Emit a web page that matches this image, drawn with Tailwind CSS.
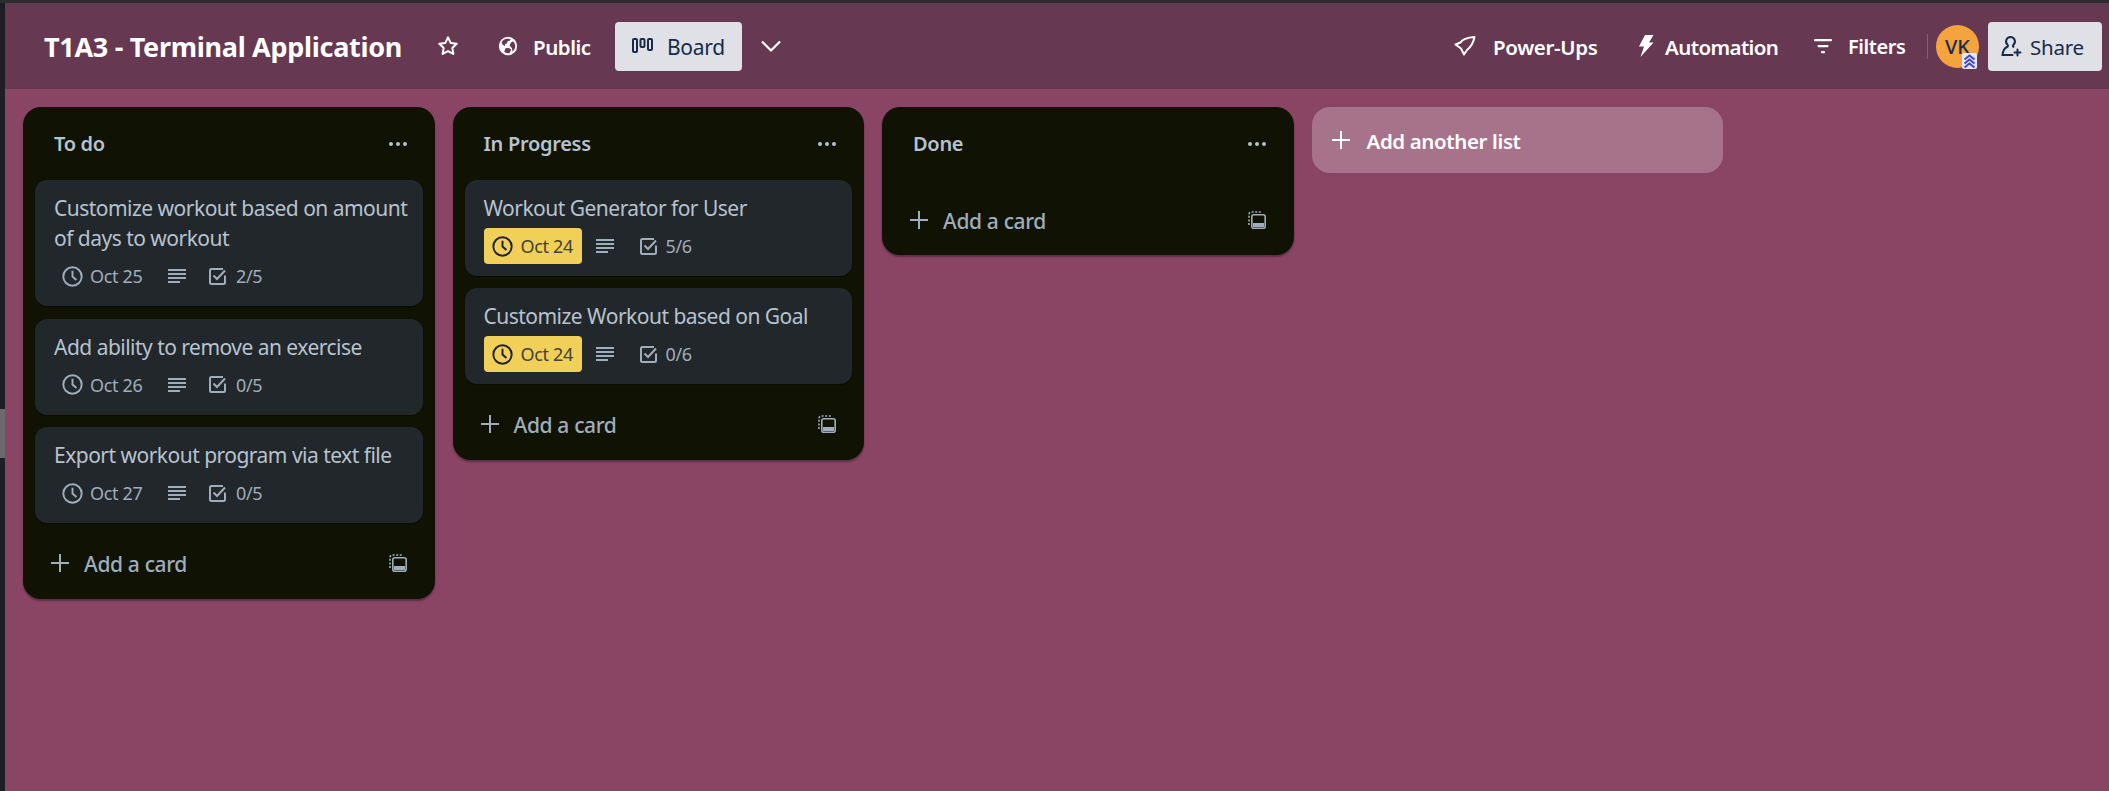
<!DOCTYPE html>
<html>
<head>
<meta charset="utf-8">
<script src="https://cdn.jsdelivr.net/npm/@tailwindcss/browser@4"></script>
</head>
<body class="m-0 h-[791px] w-[2109px] overflow-hidden bg-[#8a4565] font-['Noto_Sans','Open_Sans',sans-serif]">
<div class="h-[3px] bg-[#2b2d31]"></div>
<div class="flex h-[788px]">
  <aside class="w-[5px] shrink-0 bg-[#1e1f26]">
    <div class="mt-[406px] h-[49px] bg-[#6a6a6e]"></div>
  </aside>
  <main class="flex-1 min-w-0 flex flex-col">
    <header class="h-[86px] shrink-0 bg-[#673852] flex items-center text-white">
      <h1 class="ml-[39px] w-[359px] whitespace-nowrap text-[27px] leading-[34px] font-bold tracking-[-0.3px] pt-px">T1A3 - Terminal Application</h1>
      <svg class="ml-[34px] w-[22px] h-[22px]" viewBox="0 0 24 24" fill="none" stroke="currentColor" stroke-width="2.2" stroke-linejoin="round"><path d="M12 2.500l2.900 6.100 6.600.9-4.800 4.600 1.200 6.600L12 17.500l-5.900 3.200 1.200-6.600-4.800-4.600 6.600-.9z"/></svg>
      <svg class="ml-[38px] w-[22px] h-[22px]" viewBox="0 0 24 24" fill="currentColor"><path fill-rule="evenodd" d="M12 2a10 10 0 1 0 0 20 10 10 0 0 0 0-20zM6 6.200A8 8 0 0 1 12 4c1 0 2 .2 2.900.5l-1 1.700-2.400.6-.5 2.200-2.300 1 .3 2.200-2.500-1.200L5 8.500zM13.500 19.900a8 8 0 0 1-5.600-1.700l1.400-3.700 3.700-.4 2.500 2.100zM17 17.900l-.6-3.400-2.500-2.900 1-3.100 2.800-1.700 1.600 2.800.7 2.400a8 8 0 0 1-3 6.200z"/></svg>
      <span class="ml-[14px] w-[59px] whitespace-nowrap text-[20.500px] leading-[28px] font-semibold tracking-[-0.45px] pt-px">Public</span>
      <button class="ml-[23px] w-[127px] h-[49px] rounded-[4px] bg-[#dfe1e6] text-[#172b4d] flex items-center pl-[17px]">
        <svg class="w-[21px] h-[16px]" viewBox="0 0 21 16" fill="none" stroke="currentColor" stroke-width="2"><rect x="1" y="1" width="4" height="13" rx="1"/><rect x="8.500" y="1" width="4" height="8" rx="1"/><rect x="16" y="1" width="4" height="11" rx="1"/></svg>
        <span class="ml-[14px] text-[21px] leading-[28px] tracking-[-0.3px] pt-px">Board</span>
      </button>
      <svg class="ml-[18px] w-[22px] h-[14px]" viewBox="0 0 22 14" fill="none" stroke="currentColor" stroke-width="2.200"><path d="M2 2.500l9 9 9-9"/></svg>
      <div class="ml-auto flex items-center pr-[7px]">
        <svg class="w-[24px] h-[24px]" viewBox="0 0 24 24" fill="none" stroke="currentColor" stroke-width="2" stroke-linejoin="round"><path d="M21.500 3C15 3.500 9.500 5 7.500 8.500L2.500 10.500l5.500 4 3 6 3-4.500C18.500 12.500 20.500 8 21.500 3z"/></svg>
        <span class="ml-[16px] w-[104px] whitespace-nowrap text-[20.500px] leading-[28px] font-semibold tracking-[-0.35px] pt-px">Power-Ups</span>
        <svg class="ml-[41px] w-[16px] h-[24px]" viewBox="0 0 16 24" fill="currentColor"><path d="M7 1h8.500L11 8.500h4.500L2.500 23l3.500-10.500H1z"/></svg>
        <span class="ml-[11px] w-[114px] whitespace-nowrap text-[20.500px] leading-[28px] font-semibold tracking-[-0.6px] pt-px">Automation</span>
        <svg class="ml-[35px] w-[18px] h-[16px]" viewBox="0 0 18 16" fill="currentColor"><rect y="1" width="18" height="2.200" rx="1"/><rect x="3.500" y="7" width="11" height="2.200" rx="1"/><rect x="7" y="13" width="4" height="2.200" rx="1"/></svg>
        <span class="ml-[16px] w-[57px] whitespace-nowrap text-[20px] leading-[28px] font-semibold tracking-[-0.45px] pt-px">Filters</span>
        <div class="ml-[22px] w-px h-[25px] bg-white/20"></div>
        <div class="relative ml-[8px] w-[43px] h-[43px] rounded-full bg-[#f5a33c] text-[#172b4d] flex items-center justify-center text-[20px] leading-[28px] font-medium pt-px">VK
          <svg class="absolute right-[2px] bottom-[-1px] w-[15px] h-[16px] rounded-[2px] bg-[#e4e6f2]" viewBox="0 0 15 16" fill="none" stroke="#3f45c4" stroke-width="2"><path d="M2.500 6.500l5-4 5 4M2.500 10.500l5-4 5 4M2.500 14.500l5-4 5 4"/></svg>
        </div>
        <button class="ml-[9px] w-[114px] h-[49px] rounded-[4px] bg-[#dfe1e6] text-[#172b4d] flex items-center pl-[13px]">
          <svg class="w-[21px] h-[22px]" viewBox="0 0 21 22" fill="none" stroke="currentColor" stroke-width="2" stroke-linecap="round"><path d="M9.500 2a4.500 4.500 0 0 1 3 7.800c-.8.700-.8 1.500 0 2M6.500 9.800A4.500 4.500 0 0 1 9.500 2M6.500 9.800c.8.800.5 1.700-.5 2.200-2.500 1.200-4 3-4.500 8h10"/><path d="M16.500 14.500v6M13.500 17.500h6"/></svg>
          <span class="ml-[8px] text-[20.500px] leading-[28px] tracking-[-0.25px] pt-px">Share</span>
        </button>
      </div>
    </header>

    <section class="flex-1 flex items-start gap-[18px] pl-[18px] pt-[18px]">

      <div class="w-[411.500px] shrink-0 rounded-[18px] bg-[#101204] px-[12px] shadow-[0_2px_2px_rgba(0,0,0,0.35)]">
        <div class="h-[73px] flex items-center justify-between pl-[19px] pr-[15px]">
          <h2 class="text-[20px] leading-[28px] font-semibold text-[#b6c2cf] tracking-[-0.3px] pt-px">To do</h2>
          <svg class="w-[20px] h-[6px] text-[#b6c2cf]" viewBox="0 0 20 6" fill="currentColor"><circle cx="3" cy="3" r="2"/><circle cx="10" cy="3" r="2"/><circle cx="17" cy="3" r="2"/></svg>
        </div>
        <div class="flex flex-col gap-[12.500px]">
          <article class="rounded-[12px] bg-[#22272b] pt-[13px] pb-[12px] pl-[19px] pr-[12px] shadow-[0_1px_1px_rgba(0,0,0,0.4)]">
            <p class="text-[21px] leading-[30px] text-[#b6c2cf] tracking-[-0.52px]">Customize workout based on amount of days to workout</p>
            <div class="mt-[5px] h-[36px] flex items-center text-[#9fadbc] text-[18px] tracking-[-0.35px]">
              <svg class="ml-[8px] w-[21px] h-[21px]" viewBox="0 0 24 24" fill="none" stroke="currentColor" stroke-width="2.200"><circle cx="12" cy="12" r="10.500"/><path d="M12 5.500V12l4.500 4"/></svg>
              <span class="ml-[7px] w-[54px] whitespace-nowrap pt-px">Oct 25</span>
              <svg class="ml-[24px] w-[18px] h-[16px]" viewBox="0 0 18 16" fill="currentColor"><rect y="1" width="18" height="2"/><rect y="5" width="18" height="2"/><rect y="9" width="18" height="2"/><rect y="13" width="12" height="2"/></svg>
              <svg class="ml-[23px] w-[17px] h-[17px]" viewBox="0 0 17 17" fill="none" stroke="currentColor" stroke-width="2"><path d="M16 7.500V14.500a1.500 1.500 0 0 1-1.500 1.500H2.500A1.500 1.500 0 0 1 1 14.500V2.500A1.500 1.500 0 0 1 2.500 1H14M4.500 7.500l3.500 3.500 8-8.500"/></svg>
              <span class="ml-[10px] pt-px">2/5</span>
            </div>
          </article>
          <article class="rounded-[12px] bg-[#22272b] pt-[13px] pb-[12px] pl-[19px] pr-[12px] shadow-[0_1px_1px_rgba(0,0,0,0.4)]">
            <p class="text-[21px] leading-[30px] text-[#b6c2cf] tracking-[-0.52px]">Add ability to remove an exercise</p>
            <div class="mt-[5px] h-[36px] flex items-center text-[#9fadbc] text-[18px] tracking-[-0.35px]">
              <svg class="ml-[8px] w-[21px] h-[21px]" viewBox="0 0 24 24" fill="none" stroke="currentColor" stroke-width="2.200"><circle cx="12" cy="12" r="10.500"/><path d="M12 5.500V12l4.500 4"/></svg>
              <span class="ml-[7px] w-[54px] whitespace-nowrap pt-px">Oct 26</span>
              <svg class="ml-[24px] w-[18px] h-[16px]" viewBox="0 0 18 16" fill="currentColor"><rect y="1" width="18" height="2"/><rect y="5" width="18" height="2"/><rect y="9" width="18" height="2"/><rect y="13" width="12" height="2"/></svg>
              <svg class="ml-[23px] w-[17px] h-[17px]" viewBox="0 0 17 17" fill="none" stroke="currentColor" stroke-width="2"><path d="M16 7.500V14.500a1.500 1.500 0 0 1-1.500 1.500H2.500A1.500 1.500 0 0 1 1 14.500V2.500A1.500 1.500 0 0 1 2.500 1H14M4.500 7.500l3.500 3.500 8-8.500"/></svg>
              <span class="ml-[10px] pt-px">0/5</span>
            </div>
          </article>
          <article class="rounded-[12px] bg-[#22272b] pt-[13px] pb-[12px] pl-[19px] pr-[12px] shadow-[0_1px_1px_rgba(0,0,0,0.4)]">
            <p class="text-[21px] leading-[30px] text-[#b6c2cf] tracking-[-0.52px]">Export workout program via text file</p>
            <div class="mt-[5px] h-[36px] flex items-center text-[#9fadbc] text-[18px] tracking-[-0.35px]">
              <svg class="ml-[8px] w-[21px] h-[21px]" viewBox="0 0 24 24" fill="none" stroke="currentColor" stroke-width="2.200"><circle cx="12" cy="12" r="10.500"/><path d="M12 5.500V12l4.500 4"/></svg>
              <span class="ml-[7px] w-[54px] whitespace-nowrap pt-px">Oct 27</span>
              <svg class="ml-[24px] w-[18px] h-[16px]" viewBox="0 0 18 16" fill="currentColor"><rect y="1" width="18" height="2"/><rect y="5" width="18" height="2"/><rect y="9" width="18" height="2"/><rect y="13" width="12" height="2"/></svg>
              <svg class="ml-[23px] w-[17px] h-[17px]" viewBox="0 0 17 17" fill="none" stroke="currentColor" stroke-width="2"><path d="M16 7.500V14.500a1.500 1.500 0 0 1-1.500 1.500H2.500A1.500 1.500 0 0 1 1 14.500V2.500A1.500 1.500 0 0 1 2.500 1H14M4.500 7.500l3.500 3.500 8-8.500"/></svg>
              <span class="ml-[10px] pt-px">0/5</span>
            </div>
          </article>
        </div>
        <div class="pt-[22px] pb-[18px] pl-[16px] pr-[16px] flex items-center text-[#9fadbc]">
          <div class="h-[36px] flex items-center flex-1">
            <svg class="w-[18px] h-[18px]" viewBox="0 0 18 18" fill="currentColor"><rect x="8" width="2" height="18"/><rect y="8" width="18" height="2"/></svg>
            <span class="ml-[15px] text-[21px] leading-[28px] font-medium tracking-[-0.35px] pt-px">Add a card</span>
          </div>
          <svg class="w-[18px] h-[18px]" viewBox="0 0 18 18" fill="none" stroke="currentColor" stroke-width="1.600"><path d="M1 14V3.500A2.500 2.500 0 0 1 3.500 1H14" stroke-dasharray="2 1.600"/><rect x="3.800" y="3.800" width="13.400" height="13.400" rx="2"/><rect x="5" y="12" width="11" height="4" fill="currentColor" stroke="none"/></svg>
        </div>
      </div>

      <div class="w-[411.500px] shrink-0 rounded-[18px] bg-[#101204] px-[12px] shadow-[0_2px_2px_rgba(0,0,0,0.35)]">
        <div class="h-[73px] flex items-center justify-between pl-[19px] pr-[15px]">
          <h2 class="text-[20px] leading-[28px] font-semibold text-[#b6c2cf] tracking-[-0.3px] pt-px">In Progress</h2>
          <svg class="w-[20px] h-[6px] text-[#b6c2cf]" viewBox="0 0 20 6" fill="currentColor"><circle cx="3" cy="3" r="2"/><circle cx="10" cy="3" r="2"/><circle cx="17" cy="3" r="2"/></svg>
        </div>
        <div class="flex flex-col gap-[12px]">
          <article class="rounded-[12px] bg-[#22272b] pt-[13px] pb-[12px] pl-[19px] pr-[12px] shadow-[0_1px_1px_rgba(0,0,0,0.4)]">
            <p class="text-[21px] leading-[30px] text-[#b6c2cf] tracking-[-0.52px]">Workout Generator for User</p>
            <div class="mt-[5px] h-[36px] flex items-center text-[#9fadbc] text-[18px] tracking-[-0.35px]">
              <div class="w-[98px] h-[36px] rounded-[4px] bg-[#f0d058] text-[#1d2125] flex items-center pl-[8px]">
                <svg class="w-[21px] h-[21px]" viewBox="0 0 24 24" fill="none" stroke="currentColor" stroke-width="2.200"><circle cx="12" cy="12" r="10.500"/><path d="M12 5.500V12l4.500 4"/></svg>
                <span class="ml-[8px] whitespace-nowrap text-[#44403a] pt-px">Oct 24</span>
              </div>
              <svg class="ml-[14px] w-[18px] h-[16px]" viewBox="0 0 18 16" fill="currentColor"><rect y="1" width="18" height="2"/><rect y="5" width="18" height="2"/><rect y="9" width="18" height="2"/><rect y="13" width="12" height="2"/></svg>
              <svg class="ml-[26px] w-[17px] h-[17px]" viewBox="0 0 17 17" fill="none" stroke="currentColor" stroke-width="2"><path d="M16 7.500V14.500a1.500 1.500 0 0 1-1.500 1.500H2.500A1.500 1.500 0 0 1 1 14.500V2.500A1.500 1.500 0 0 1 2.500 1H14M4.500 7.500l3.500 3.500 8-8.500"/></svg>
              <span class="ml-[9px] pt-px">5/6</span>
            </div>
          </article>
          <article class="rounded-[12px] bg-[#22272b] pt-[13px] pb-[12px] pl-[19px] pr-[12px] shadow-[0_1px_1px_rgba(0,0,0,0.4)]">
            <p class="text-[21px] leading-[30px] text-[#b6c2cf] tracking-[-0.52px]">Customize Workout based on Goal</p>
            <div class="mt-[5px] h-[36px] flex items-center text-[#9fadbc] text-[18px] tracking-[-0.35px]">
              <div class="w-[98px] h-[36px] rounded-[4px] bg-[#f0d058] text-[#1d2125] flex items-center pl-[8px]">
                <svg class="w-[21px] h-[21px]" viewBox="0 0 24 24" fill="none" stroke="currentColor" stroke-width="2.200"><circle cx="12" cy="12" r="10.500"/><path d="M12 5.500V12l4.500 4"/></svg>
                <span class="ml-[8px] whitespace-nowrap text-[#44403a] pt-px">Oct 24</span>
              </div>
              <svg class="ml-[14px] w-[18px] h-[16px]" viewBox="0 0 18 16" fill="currentColor"><rect y="1" width="18" height="2"/><rect y="5" width="18" height="2"/><rect y="9" width="18" height="2"/><rect y="13" width="12" height="2"/></svg>
              <svg class="ml-[26px] w-[17px] h-[17px]" viewBox="0 0 17 17" fill="none" stroke="currentColor" stroke-width="2"><path d="M16 7.500V14.500a1.500 1.500 0 0 1-1.500 1.500H2.500A1.500 1.500 0 0 1 1 14.500V2.500A1.500 1.500 0 0 1 2.500 1H14M4.500 7.500l3.500 3.500 8-8.500"/></svg>
              <span class="ml-[9px] pt-px">0/6</span>
            </div>
          </article>
        </div>
        <div class="pt-[22px] pb-[18px] pl-[16px] pr-[16px] flex items-center text-[#9fadbc]">
          <div class="h-[36px] flex items-center flex-1">
            <svg class="w-[18px] h-[18px]" viewBox="0 0 18 18" fill="currentColor"><rect x="8" width="2" height="18"/><rect y="8" width="18" height="2"/></svg>
            <span class="ml-[15px] text-[21px] leading-[28px] font-medium tracking-[-0.35px] pt-px">Add a card</span>
          </div>
          <svg class="w-[18px] h-[18px]" viewBox="0 0 18 18" fill="none" stroke="currentColor" stroke-width="1.600"><path d="M1 14V3.500A2.500 2.500 0 0 1 3.500 1H14" stroke-dasharray="2 1.600"/><rect x="3.800" y="3.800" width="13.400" height="13.400" rx="2"/><rect x="5" y="12" width="11" height="4" fill="currentColor" stroke="none"/></svg>
        </div>
      </div>

      <div class="w-[411.500px] shrink-0 rounded-[18px] bg-[#101204] px-[12px] shadow-[0_2px_2px_rgba(0,0,0,0.35)]">
        <div class="h-[73px] flex items-center justify-between pl-[19px] pr-[15px]">
          <h2 class="text-[20px] leading-[28px] font-semibold text-[#b6c2cf] tracking-[-0.3px] pt-px">Done</h2>
          <svg class="w-[20px] h-[6px] text-[#b6c2cf]" viewBox="0 0 20 6" fill="currentColor"><circle cx="3" cy="3" r="2"/><circle cx="10" cy="3" r="2"/><circle cx="17" cy="3" r="2"/></svg>
        </div>
        <div class="pt-[22px] pb-[17px] pl-[16px] pr-[16px] flex items-center text-[#9fadbc]">
          <div class="h-[36px] flex items-center flex-1">
            <svg class="w-[18px] h-[18px]" viewBox="0 0 18 18" fill="currentColor"><rect x="8" width="2" height="18"/><rect y="8" width="18" height="2"/></svg>
            <span class="ml-[15px] text-[21px] leading-[28px] font-medium tracking-[-0.35px] pt-px">Add a card</span>
          </div>
          <svg class="w-[18px] h-[18px]" viewBox="0 0 18 18" fill="none" stroke="currentColor" stroke-width="1.600"><path d="M1 14V3.500A2.500 2.500 0 0 1 3.500 1H14" stroke-dasharray="2 1.600"/><rect x="3.800" y="3.800" width="13.400" height="13.400" rx="2"/><rect x="5" y="12" width="11" height="4" fill="currentColor" stroke="none"/></svg>
        </div>
      </div>

      <button class="w-[411.500px] h-[66px] shrink-0 rounded-[18px] bg-white/25 text-white flex items-center pl-[20px]">
        <svg class="w-[18px] h-[18px]" viewBox="0 0 18 18" fill="currentColor"><rect x="8" width="2" height="18"/><rect y="8" width="18" height="2"/></svg>
        <span class="ml-[17px] text-[20.500px] leading-[28px] font-semibold tracking-[-0.38px] pt-px">Add another list</span>
      </button>
    </section>
  </main>
</div>
</body>
</html>
